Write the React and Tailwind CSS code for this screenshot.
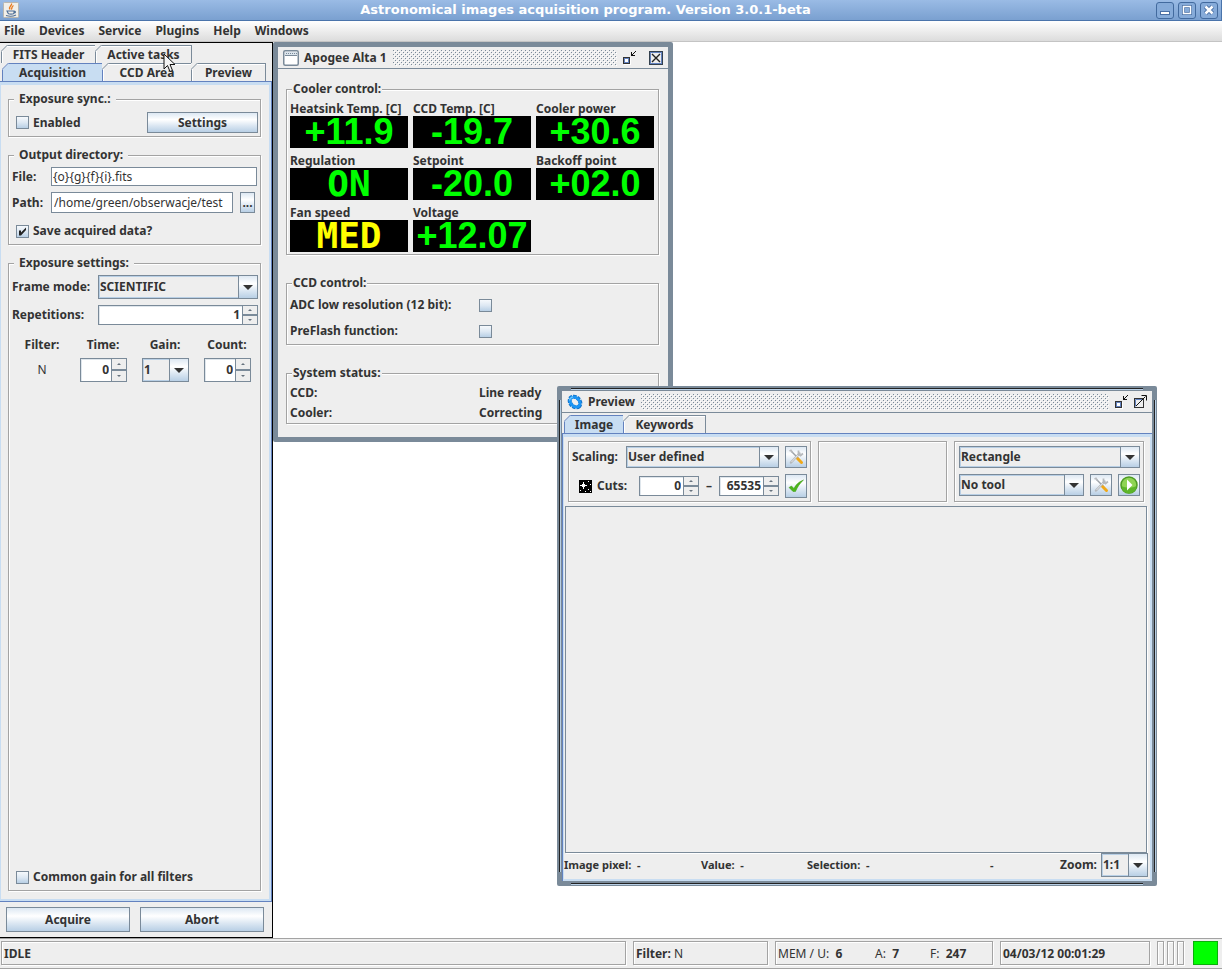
import { useState } from 'react'
import clsx from 'clsx'

const BUTTON_BG = 'bg-[linear-gradient(#dde8f3,#ffffff_35%,#dde8f3_65%,#b8cfe5)]'
const ETCHED = 'border border-[#a3a3a3] shadow-[1px_1px_0_#fff,inset_1px_1px_0_#fff]'

const MENUS = ['File', 'Devices', 'Service', 'Plugins', 'Help', 'Windows']

const READINGS = [
  { label: 'Heatsink Temp. [C]', value: '+11.9' },
  { label: 'CCD Temp. [C]', value: '-19.7' },
  { label: 'Cooler power', value: '+30.6' },
  { label: 'Regulation', value: 'ON', word: true },
  { label: 'Setpoint', value: '-20.0' },
  { label: 'Backoff point', value: '+02.0' },
  { label: 'Fan speed', value: 'MED', word: true, warn: true },
  { label: 'Voltage', value: '+12.07' },
]

function Button({ className, children, ...props }) {
  return (
    <button type="button" className={clsx('flex items-center justify-center border border-[#7a8a99] font-bold', BUTTON_BG, className)} {...props}>
      {children}
    </button>
  )
}

function Group({ title, className, bodyClassName, legendClassName = 'ml-[5px] px-[5px]', children }) {
  return (
    <fieldset className={clsx('min-w-0', ETCHED, className)}>
      <legend className={clsx('bg-[#eeeeee] leading-4', legendClassName)}>{title}</legend>
      <div className={clsx('h-full', bodyClassName)}>{children}</div>
    </fieldset>
  )
}

function Checkbox({ id, defaultChecked }) {
  return (
    <span className="grid size-[13px] shrink-0 place-items-center">
      <input
        id={id}
        type="checkbox"
        defaultChecked={defaultChecked}
        className="peer col-start-1 row-start-1 size-[13px] appearance-none border border-[#7a8a99] bg-[linear-gradient(#f6f9fc,#dde8f3_50%,#b8cfe5)]"
      />
      <svg viewBox="0 0 9 9" className="pointer-events-none invisible col-start-1 row-start-1 size-[9px] peer-checked:visible">
        <path d="M1 3.500h2v2L8 .5V3L3 8.500H1z" fill="#222" />
      </svg>
    </span>
  )
}

function Combo({ id, label, value, className }) {
  return (
    <span className={clsx('relative flex', className)}>
      <select
        id={id}
        aria-label={label}
        className="w-full appearance-none border border-[#7a8a99] bg-[#eeeeee] pr-5 pb-px pl-[1px] font-bold shadow-[inset_0_0_0_1px_#b8cfe5]"
      >
        <option>{value}</option>
      </select>
      <span className={clsx('pointer-events-none absolute inset-y-0 right-0 flex w-5 items-center justify-center border border-[#7a8a99]', BUTTON_BG)}>
        <svg viewBox="0 0 10 5" className="h-[5px] w-[10px]">
          <path d="M0 0h10L5 5z" fill="#333" />
        </svg>
      </span>
    </span>
  )
}

function Spinner({ id, label, value, className }) {
  const [current, setCurrent] = useState(value)
  const arrow = 'flex min-h-0 flex-1 items-center justify-center border border-[#7a8a99] bg-[#eeeeee]'

  return (
    <span className={clsx('flex', className)}>
      <input
        id={id}
        aria-label={label}
        type="text"
        value={current}
        onChange={(event) => setCurrent(event.target.value)}
        className="w-0 min-w-0 flex-1 border border-r-0 border-[#7a8a99] bg-white pr-[2px] text-right font-bold shadow-[inset_1px_1px_0_#dfe6ec]"
      />
      <span className="flex w-4 flex-col">
        <button type="button" aria-label="Increase" className={arrow} onClick={() => setCurrent(Number(current) + 1)}>
          <svg viewBox="0 0 4 2" className="h-[2px] w-1">
            <path d="M0 2h4L2 0z" fill="#66727e" />
          </svg>
        </button>
        <button type="button" aria-label="Decrease" className={arrow} onClick={() => setCurrent(Number(current) - 1)}>
          <svg viewBox="0 0 4 2" className="h-[2px] w-1">
            <path d="M0 0h4L2 2z" fill="#66727e" />
          </svg>
        </button>
      </span>
    </span>
  )
}

function Tab({ selected, className, children }) {
  const line = selected ? '#6382bf' : '#7a8a99'

  return (
    <button
      type="button"
      role="tab"
      aria-selected={Boolean(selected)}
      className={clsx(
        'relative flex items-center justify-center border-t border-r font-bold whitespace-nowrap',
        selected ? 'border-l border-[#6382bf] bg-[#c8ddf2]' : 'border-[#7a8a99] bg-[#eeeeee] shadow-[inset_1px_1px_0_#fff]',
        className,
      )}
    >
      <svg viewBox="0 0 7 7" className="absolute -top-px -left-px size-[7px]">
        <path d="M0 0h7L0 7z" fill="#eee" />
        <path d="M0 6.500L6.500 0" stroke={line} />
      </svg>
      {children}
    </button>
  )
}

function ToolsIcon() {
  return (
    <svg viewBox="0 0 16 16" className="size-4">
      <path d="M3 2l8 8" stroke="#9aa0a6" strokeWidth="1.500" />
      <path d="M9.500 9.500l4 4" stroke="#f0a818" strokeWidth="3" strokeLinecap="round" />
      <path d="M3 13.500l8.500-9" stroke="#b5b9bd" strokeWidth="2.500" strokeLinecap="round" />
      <path d="M3.500 13l7.500-8" stroke="#e4e6e8" strokeWidth="1" />
      <path d="M10.500 1.500v3.500l2 1.500 2.500-2" stroke="#b5b9bd" strokeWidth="1.800" fill="none" />
      <path d="M1.500 2l1.500-.8 1.500 2.300" stroke="#b9bcc0" strokeWidth="1.500" fill="none" />
    </svg>
  )
}

function CheckIcon() {
  return (
    <svg viewBox="0 0 16 16" className="size-4">
      <path d="M1 9.500l2.500-1.500 2.500 2.500c2-4 4.500-6.500 9.500-8.500-4 3.500-6 7-8 11.500H5z" fill="#4db51c" stroke="#3c9a14" strokeWidth=".5" />
    </svg>
  )
}

function PlayIcon() {
  return (
    <svg viewBox="0 0 18 18" className="size-[18px]">
      <circle cx="9" cy="9" r="8" fill="#8fd454" stroke="#4c9a22" strokeWidth="1.500" />
      <path d="M1.500 10a7.500 7.500 0 0 0 15 0c-4 2-11 2-15 0z" fill="#5db52a" />
      <path d="M7 3.500L12.500 9 7 14.500z" fill="#fff" />
    </svg>
  )
}

function StarsIcon() {
  return (
    <svg viewBox="0 0 13 13" className="size-[13px]" shapeRendering="crispEdges">
      <path d="M0 0h13v13H0z" fill="#000" />
      <path d="M4 2h1v7H4zM1 5h7v1H1zM3 4h3v3H3zM9 1h1v1H9zM11 4h1v1h-1zM9 9h1v1H9zM1 10h1v1H1zM6 11h1v1H6zM11 11h1v1h-1z" fill="#fff" />
    </svg>
  )
}

function GearIcon() {
  return (
    <svg viewBox="0 0 16 16" className="size-4">
      <ellipse cx="8" cy="8" rx="6" ry="4.600" transform="rotate(45 8 8)" fill="none" stroke="#1377cf" strokeWidth="4" strokeDasharray="3 .8" />
      <ellipse cx="8" cy="8" rx="5.600" ry="4.200" transform="rotate(45 8 8)" fill="none" stroke="#1b95f4" strokeWidth="2.800" />
      <path d="M2.500 6.500c.3-2 1.500-3.300 3.500-3.700" stroke="#6cc6ff" strokeWidth="1.200" fill="none" />
    </svg>
  )
}

function DocIcon() {
  return (
    <svg viewBox="0 0 16 16" className="size-4">
      <rect x=".75" y=".75" width="14.500" height="14.500" rx="1.500" fill="#fff" stroke="#7a8a99" strokeWidth="1.500" />
      <path d="M2 2h12v3H2z" fill="#dbe4ec" />
      <path d="M2 5.500h12" stroke="#7a8a99" />
      <path d="M3 3.500h11" stroke="#7a8a99" strokeDasharray="1 1" />
    </svg>
  )
}

function IconifyIcon() {
  return (
    <svg viewBox="0 0 14 14" className="size-[14px]" shapeRendering="crispEdges">
      <path d="M2 7h7v7H2z" fill="#fff" />
      <path d="M1 6h7v7H1zM3 8v3h3V8z" fill="#333" fillRule="evenodd" />
      <path d="M2 7h5v5H2zM3 8v3h3V8z" fill="#6382bf" fillRule="evenodd" />
      <path d="M9 1h1v4H9zM9 4h4v1H9zM11 2h1v1h-1zM12 1h1v1h-1zM13 0h1v1h-1zM10 3h1v1h-1z" fill="#111" />
    </svg>
  )
}

function CloseIcon() {
  return (
    <svg viewBox="0 0 14 14" className="size-[14px]">
      <rect x=".5" y=".5" width="13" height="13" fill="#eee" stroke="#33404d" />
      <rect x="1.500" y="1.500" width="11" height="11" fill="none" stroke="#6382bf" />
      <path d="M3 3l8 8M11 3l-8 8" stroke="#222" strokeWidth="1.400" />
    </svg>
  )
}

function MaximizeIcon() {
  return (
    <svg viewBox="0 0 14 14" className="size-[14px]">
      <rect x="1.500" y="3.500" width="9" height="9" fill="#eee" stroke="#333" />
      <path d="M2.500 11.500v-7h7" stroke="#6382bf" fill="none" />
      <path d="M3 11l9.500-9.500M8.500 .5h5v5" stroke="#111" fill="none" />
    </svg>
  )
}

function JavaIcon() {
  return (
    <svg viewBox="0 0 16 16" className="size-4">
      <rect x=".5" y=".5" width="15" height="15" rx="1" fill="#f1efe9" stroke="#b9b7b0" />
      <path d="M8.500 1.500c1 2-3.500 3-1.500 6M10.500 3.500C8 5 9.500 6 8.300 7.500" stroke="#e8791c" strokeWidth="1.300" fill="none" />
      <path d="M4 9h7v2c0 1.500-6 1.500-6 0zM11 9c2 0 2 2 0 2M3 13.500c3 1 7 1 10-.5" stroke="#4f6f97" strokeWidth="1.100" fill="none" />
    </svg>
  )
}

function WindowButton({ label, children }) {
  return (
    <button type="button" aria-label={label} className="flex h-[17px] w-[18px] items-center justify-center rounded-[3px] border border-[#426a9e] bg-[#86abd9]">
      <svg viewBox="0 0 12 12" className="size-3">{children}</svg>
    </button>
  )
}

function TitleBar() {
  return (
    <header className="flex h-[21px] items-center border-r border-b border-[#4a74ab] bg-linear-to-b from-[#9abbe5] to-[#7aa0d0] pr-[3px] pl-[3px]">
      <JavaIcon />
      <h1 className="flex-1 pr-1 text-center font-['DejaVu_Sans'] text-[13px] leading-4 font-bold text-white">
        Astronomical images acquisition program. Version 3.0.1-beta
      </h1>
      <div className="flex gap-1">
        <WindowButton label="Minimize">
          <rect x="1.500" y="7.500" width="9" height="3" fill="#fff" stroke="#4a70a5" />
        </WindowButton>
        <WindowButton label="Maximize">
          <rect x="2.500" y="2.500" width="7" height="7" fill="none" stroke="#4a70a5" strokeWidth="3" />
          <rect x="2.500" y="2.500" width="7" height="7" fill="none" stroke="#fff" strokeWidth="1.500" />
        </WindowButton>
        <WindowButton label="Close">
          <path d="M2.500 2.500l7 7M9.500 2.500l-7 7" stroke="#4a70a5" strokeWidth="4.500" />
          <path d="M2.500 2.500l7 7M9.500 2.500l-7 7" stroke="#fff" strokeWidth="2.500" />
        </WindowButton>
      </div>
    </header>
  )
}

function AcquisitionPanel() {
  return (
    <aside className="flex w-[273px] shrink-0 flex-col border-t border-r border-b border-black bg-[#eeeeee]">
      <div role="tablist" className="pt-[2px]">
        <div className="flex h-[18px] pl-[1px]">
          <Tab className="w-[95px] border-l">FITS Header</Tab>
          <Tab className="w-[96px]">Active tasks</Tab>
        </div>
        <div className="flex h-[18px] pl-[2px]">
          <Tab selected className="w-[101px]">Acquisition</Tab>
          <Tab className="w-[89px]">CCD Area</Tab>
          <Tab className="w-[74px]">Preview</Tab>
        </div>
      </div>

      <div className="flex flex-1 flex-col border-t border-r border-b border-[#6382bf]">
        <div className="flex flex-1 flex-col gap-[10px] border-t-3 border-r-2 border-b-2 border-l border-[#c8ddf2] pt-[6px] pr-2 pb-2 pl-[7px]">
          <Group title="Exposure sync.:" bodyClassName="pt-[5px] pr-[2px] pb-[3px] pl-[7px]">
            <div className="flex items-center gap-1">
              <Checkbox id="sync" />
              <label htmlFor="sync" className="flex-1">Enabled</label>
              <Button className="h-[21px] w-[111px]">Settings</Button>
            </div>
          </Group>

          <Group title="Output directory:" bodyClassName="px-[3px] pt-1 pb-[5px]">
            <div className="flex items-center">
              <label htmlFor="file" className="w-[39px]">File:</label>
              <input id="file" type="text" defaultValue="{o}{g}{f}{i}.fits" className="h-[19px] w-0 flex-1 border border-[#7a8a99] bg-white px-[1px] font-normal" />
            </div>
            <div className="mt-[6px] flex items-center pr-[2px]">
              <label htmlFor="path" className="w-[39px]">Path:</label>
              <input id="path" type="text" defaultValue="/home/green/obserwacje/test" className="h-[21px] w-0 flex-1 border border-[#7a8a99] bg-white px-[2px] font-normal" />
              <Button className="ml-[7px] h-[21px] w-[15px]">...</Button>
            </div>
            <div className="mt-[10px] flex items-center gap-1 pl-1">
              <Checkbox id="save" defaultChecked />
              <label htmlFor="save">Save acquired data?</label>
            </div>
          </Group>

          <Group title="Exposure settings:" className="flex-1" bodyClassName="flex flex-col pt-1 pr-[2px] pb-[5px] pl-[3px]">
            <div className="flex items-center">
              <label htmlFor="mode" className="w-[86px]">Frame mode:</label>
              <Combo id="mode" value="SCIENTIFIC" className="h-6 flex-1" />
            </div>
            <div className="mt-[6px] flex items-center">
              <label htmlFor="reps" className="w-[86px]">Repetitions:</label>
              <Spinner id="reps" value={1} className="h-5 flex-1" />
            </div>
            <table className="mt-3 w-[246px] table-fixed text-center">
              <thead>
                <tr>
                  <th scope="col" className="w-[60px]">Filter:</th>
                  <th scope="col" className="w-[62px]">Time:</th>
                  <th scope="col" className="w-[62px]">Gain:</th>
                  <th scope="col" className="w-[62px]">Count:</th>
                </tr>
              </thead>
              <tbody>
                <tr>
                  <td className="pt-[5px] font-normal">N</td>
                  <td className="pt-[5px] pl-2"><Spinner label="Time" value={0} className="h-6 w-[47px]" /></td>
                  <td className="pt-[5px] pl-2"><Combo label="Gain" value="1" className="h-6 w-[47px]" /></td>
                  <td className="pt-[5px] pl-2"><Spinner label="Count" value={0} className="h-6 w-[47px]" /></td>
                </tr>
              </tbody>
            </table>
            <div className="mt-auto flex items-center gap-1 pl-1">
              <Checkbox id="common-gain" />
              <label htmlFor="common-gain">Common gain for all filters</label>
            </div>
          </Group>
        </div>
      </div>

      <div className="flex gap-[10px] py-[5px] pr-2 pl-[6px]">
        <Button className="h-[25px] flex-1">Acquire</Button>
        <Button className="h-[25px] flex-1">Abort</Button>
      </div>
    </aside>
  )
}

function Bumps({ id }) {
  return (
    <svg aria-hidden="true" className="mr-[5px] ml-[6px] h-4 w-0 flex-1" shapeRendering="crispEdges">
      <pattern id={id} width="4" height="4" patternUnits="userSpaceOnUse">
        <path d="M0 0h1v1H0zM2 2h1v1H2z" fill="#7a8a99" />
        <path d="M1 1h1v1H1zM3 3h1v1H3z" fill="#fff" />
      </pattern>
      <rect width="100%" height="100%" fill={`url(#${id})`} />
    </svg>
  )
}

function FrameTitle({ icon, title, children }) {
  return (
    <div className="flex h-[22px] items-center border-b border-[#7a8a99] px-[5px]">
      {icon}
      <h2 className="ml-[5px] font-bold">{title}</h2>
      <Bumps id={`bumps-${title.replaceAll(' ', '-')}`} />
      {children}
    </div>
  )
}

function Readout({ value, word, warn }) {
  return (
    <output
      className={clsx(
        'flex h-8 w-[118px] items-center justify-center bg-black text-[36px] leading-8 font-bold',
        word ? "font-['DejaVu_Sans_Mono']" : "font-['Liberation_Sans']",
        warn ? 'text-[#ffff00]' : 'text-[#00ff00]',
      )}
    >
      {value}
    </output>
  )
}

function CameraFrame() {
  const legend = 'ml-[5px] px-[1px]'

  return (
    <section className="absolute top-0 left-0 w-[400px] rounded-[2px] border-5 border-[#7a8a99] bg-[#eeeeee]">
      <FrameTitle icon={<DocIcon />} title="Apogee Alta 1">
        <button type="button" aria-label="Iconify"><IconifyIcon /></button>
        <button type="button" aria-label="Close" className="ml-[13px]"><CloseIcon /></button>
      </FrameTitle>
      <div className="flex flex-col gap-5 pt-3 pr-[9px] pb-[13px] pl-2">
        <Group title="Cooler control:" legendClassName={legend} bodyClassName="px-[3px] pt-1 pb-[2px]">
          <div className="grid grid-cols-[118px_118px_118px] gap-[5px]">
            {READINGS.map((reading) => (
              <div key={reading.label}>
                <div className="h-[15px] leading-4 whitespace-nowrap">{reading.label}</div>
                <Readout {...reading} />
              </div>
            ))}
          </div>
        </Group>

        <Group title="CCD control:" legendClassName={legend} bodyClassName="px-[3px] pt-[1px]">
          <div className="flex h-[26px] items-center">
            <label htmlFor="adc" className="w-[189px]">ADC low resolution (12 bit):</label>
            <Checkbox id="adc" />
          </div>
          <div className="flex h-[26px] items-center">
            <label htmlFor="preflash" className="w-[189px]">PreFlash function:</label>
            <Checkbox id="preflash" />
          </div>
        </Group>

        <Group title="System status:" legendClassName={legend} bodyClassName="px-[3px] pt-[2px]">
          <dl className="grid grid-cols-[189px_1fr] leading-5">
            <dt>CCD:</dt>
            <dd>Line ready</dd>
            <dt>Cooler:</dt>
            <dd>Correcting</dd>
          </dl>
        </Group>
      </div>
    </section>
  )
}

function PreviewFrame() {
  return (
    <section className="absolute top-[344px] left-[284px] flex h-[500px] w-[600px] flex-col rounded-[2px] border-5 border-[#7a8a99] bg-[#eeeeee]">
      <span className="absolute -top-[3px] right-[9px] left-[9px] h-[2px] border-t border-[#222] bg-[#b8cfe5]" />
      <span className="absolute right-[9px] -bottom-[4px] left-[9px] h-[2px] border-t border-[#222] bg-[#b8cfe5]" />
      <span className="absolute top-[9px] bottom-[9px] -left-[3px] w-[2px] border-l border-[#222] bg-[#b8cfe5]" />
      <span className="absolute top-[9px] -right-[4px] bottom-[9px] w-[2px] border-l border-[#222] bg-[#b8cfe5]" />

      <FrameTitle icon={<GearIcon />} title="Preview">
        <button type="button" aria-label="Iconify"><IconifyIcon /></button>
        <button type="button" aria-label="Maximize" className="ml-[5px]"><MaximizeIcon /></button>
      </FrameTitle>

      <div role="tablist" className="flex h-5 pt-[2px] pl-[2px]">
        <Tab selected className="w-[60px]">Image</Tab>
        <Tab className="w-[82px]">Keywords</Tab>
      </div>

      <div className="flex min-h-0 flex-1 flex-col border-t border-l border-[#6382bf]">
        <div className="flex min-h-0 flex-1 flex-col border-t-3 border-r-2 border-b-2 border-l border-[#c8ddf2]">
          <div className="flex gap-[7px] pt-1 pr-[6px] pl-1">
            <div className={clsx('flex w-[243px] flex-col gap-[6px] px-[3px] pt-1 pb-[3px]', ETCHED)}>
              <div className="flex items-center">
                <label htmlFor="scaling" className="w-[54px]">Scaling:</label>
                <Combo id="scaling" value="User defined" className="h-[22px] w-[153px]" />
                <Button aria-label="Scaling settings" className="ml-[6px] size-[22px]"><ToolsIcon /></Button>
              </div>
              <div className="flex items-center">
                <span className="ml-[7px] flex w-[60px] items-center gap-[5px]">
                  <StarsIcon />
                  Cuts:
                </span>
                <Spinner label="Lower cut" value={0} className="h-5 w-[60px]" />
                <span className="w-5 text-center">–</span>
                <Spinner label="Upper cut" value={65535} className="h-5 w-[60px]" />
                <Button aria-label="Apply cuts" className="ml-[6px] h-6 w-[22px]"><CheckIcon /></Button>
              </div>
            </div>
            <div className={clsx('flex-1', ETCHED)} />
            <div className={clsx('flex w-[190px] flex-col gap-[6px] pt-1 pr-[3px] pb-[3px] pl-1', ETCHED)}>
              <Combo label="Selection shape" value="Rectangle" className="h-[22px]" />
              <div className="flex gap-[6px]">
                <Combo label="Tool" value="No tool" className="h-[22px] flex-1" />
                <Button aria-label="Tool settings" className="size-[22px]"><ToolsIcon /></Button>
                <Button aria-label="Run tool" className="size-[22px]"><PlayIcon /></Button>
              </div>
            </div>
          </div>

          <div className="mt-1 mr-[3px] ml-[1px] min-h-0 flex-1 border border-[#7a8a99] shadow-[1px_1px_0_#fff]" />

          <div className="flex h-[26px] items-center pr-[2px] pb-[2px]">
            <div className="flex flex-1 text-[11px]">
              <span className="w-[137px]">Image pixel: &nbsp;-</span>
              <span className="w-[106px]">Value: &nbsp;-</span>
              <span className="w-[183px]">Selection: &nbsp;-</span>
              <span>-</span>
            </div>
            <label htmlFor="zoom" className="mr-1">Zoom:</label>
            <Combo id="zoom" value="1:1" className="h-6 w-[47px]" />
          </div>
        </div>
      </div>
    </section>
  )
}

function StatusBar() {
  const cell = clsx('flex items-center px-[2px] pt-px', ETCHED)

  return (
    <footer className="flex h-[31px] items-stretch gap-[7px] border-t border-b border-[#a3a3a3] bg-[#eeeeee] pt-[2px] pr-1 pb-[3px] pl-[1px]">
      <div className={clsx(cell, 'flex-1')}>IDLE</div>
      <div className={clsx(cell, 'w-[135px]')}>Filter:&nbsp;<span className="font-normal">N</span></div>
      <div className={clsx(cell, 'w-[218px]')}>
        <span className="w-[97px]"><span className="font-normal">MEM / U:</span>&nbsp; 6</span>
        <span className="w-[55px]"><span className="font-normal">A:</span>&nbsp; 7</span>
        <span><span className="font-normal">F:</span>&nbsp; 247</span>
      </div>
      <div className={clsx(cell, 'w-[150px]')}>04/03/12 00:01:29</div>
      <div className="flex gap-[3px]">
        <div className={clsx('w-[7px]', ETCHED)} />
        <div className={clsx('w-[7px]', ETCHED)} />
        <div className={clsx('w-[7px]', ETCHED)} />
      </div>
      <div className="ml-[2px] w-[25px] border border-[#0cae0c] bg-[#00ff00]" />
    </footer>
  )
}

export default function App() {
  return (
    <div className="relative flex h-screen min-h-[900px] min-w-[1160px] flex-col bg-white font-['Noto_Sans',sans-serif] text-[12px] leading-4 font-bold text-[#333333]">
      <TitleBar />
      <nav className="flex h-[21px] items-center gap-[14px] border-b border-[#c4c4c4] bg-linear-to-b from-white to-[#dcdcdc] px-1">
        {MENUS.map((menu) => (
          <button key={menu} type="button" className="font-bold">{menu}</button>
        ))}
      </nav>
      <div className="flex min-h-0 flex-1">
        <AcquisitionPanel />
        <main className="relative flex-1">
          <CameraFrame />
          <PreviewFrame />
        </main>
      </div>
      <StatusBar />
      <svg viewBox="0 0 13 20" className="pointer-events-none absolute top-[53px] left-[163px] h-5 w-[13px]">
        <path d="M1 1v15l3.500-3.500L7 18.500l2.500-1L7 11.500h5z" fill="#f4f4f4" stroke="#111" />
      </svg>
    </div>
  )
}
